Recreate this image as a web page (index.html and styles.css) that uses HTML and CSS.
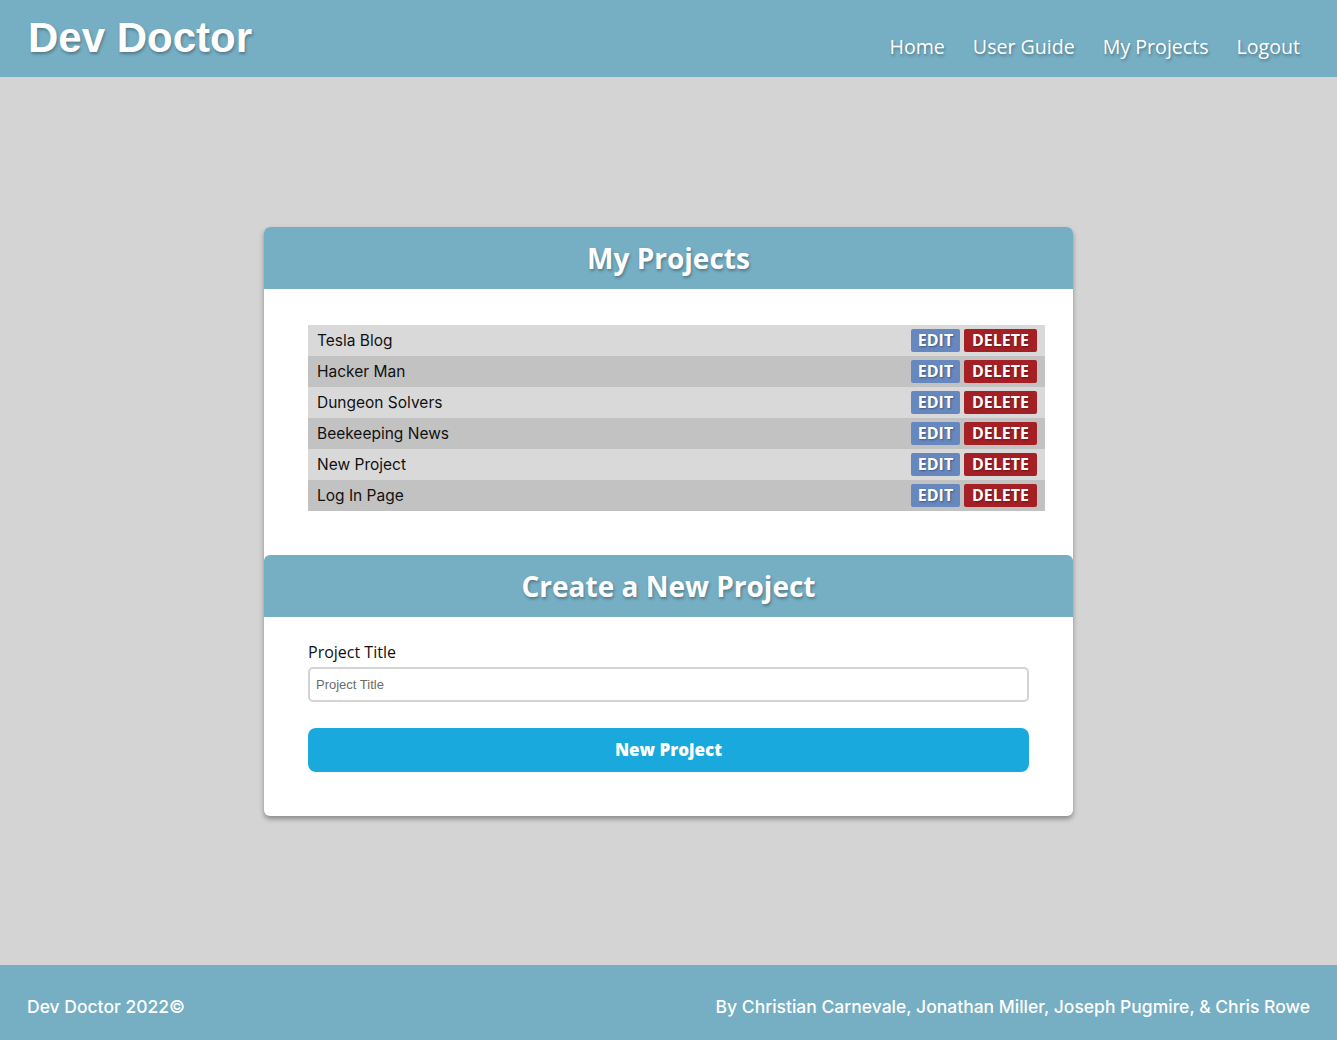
FILE: index.html
```html
<!DOCTYPE html>
<html>
<head>
<meta charset="utf-8">
<title>Dev Doctor</title>
<link rel="stylesheet" href="styles.css">
</head>
<body>
<header class="topbar">
  <h1 class="brand">Dev Doctor</h1>
  <nav class="nav">
    <a href="#">Home</a>
    <a href="#">User Guide</a>
    <a href="#">My Projects</a>
    <a href="#">Logout</a>
  </nav>
</header>
<main class="main">
  <section class="card">
    <h2 class="card-head">My Projects</h2>
    <div class="card-body list-body">
      <ul class="project-list">
        <li class="row"><span>Tesla Blog</span><span class="actions"><button class="btn-edit">EDIT</button><button class="btn-del">DELETE</button></span></li>
        <li class="row"><span>Hacker Man</span><span class="actions"><button class="btn-edit">EDIT</button><button class="btn-del">DELETE</button></span></li>
        <li class="row"><span>Dungeon Solvers</span><span class="actions"><button class="btn-edit">EDIT</button><button class="btn-del">DELETE</button></span></li>
        <li class="row"><span>Beekeeping News</span><span class="actions"><button class="btn-edit">EDIT</button><button class="btn-del">DELETE</button></span></li>
        <li class="row"><span>New Project</span><span class="actions"><button class="btn-edit">EDIT</button><button class="btn-del">DELETE</button></span></li>
        <li class="row"><span>Log In Page</span><span class="actions"><button class="btn-edit">EDIT</button><button class="btn-del">DELETE</button></span></li>
      </ul>
    </div>
    <h2 class="card-head">Create a New Project</h2>
    <form class="card-body form-body">
      <label class="label" for="title">Project Title</label>
      <input class="input" id="title" type="text" placeholder="Project Title">
      <button class="btn-new" type="button">New Project</button>
    </form>
  </section>
</main>
<footer class="footer">
  <span>Dev Doctor 2022©</span>
  <span>By Christian Carnevale, Jonathan Miller, Joseph Pugmire, &amp; Chris Rowe</span>
</footer>
</body>
</html>
```
FILE: styles.css
```css
* { box-sizing: border-box; }
html, body { margin: 0; padding: 0; height: 100%; }
body {
  background: #d4d4d4;
  font-family: "Open Sans", sans-serif;
  display: flex;
  flex-direction: column;
  min-height: 1040px;
}
.topbar {
  height: 77px;
  background: #76aec3;
  display: flex;
  justify-content: space-between;
  align-items: flex-start;
  padding: 0 37px 0 28px;
}
.brand {
  margin: 13px 0 0;
  font-family: "Liberation Sans", Arial, sans-serif;
  font-weight: bold;
  font-size: 42px;
  line-height: 50px;
  color: #fff;
  text-shadow: 1px 2px 3px rgba(0,0,0,0.3);
}
.nav {
  display: flex;
  gap: 28px;
  margin-top: 32px;
}
.nav a {
  color: #fff;
  text-decoration: none;
  font-size: 19.6px;
  line-height: 30px;
  text-shadow: 1px 2px 3px rgba(0,0,0,0.3);
}
.main {
  flex: 1;
  display: flex;
  justify-content: center;
  align-items: center;
}
.card {
  width: 809px;
  background: #fff;
  border-radius: 6px;
  box-shadow: 0 3px 5px rgba(0,0,0,0.35);
}
.card-head {
  margin: 0;
  height: 62px;
  background: #76aec3;
  border-radius: 6px 6px 0 0;
  color: #fff;
  text-align: center;
  font-size: 28px;
  font-weight: bold;
  line-height: 62px;
  text-shadow: 1px 2px 3px rgba(0,0,0,0.3);
}
.list-body {
  padding: 36px 28px 44px 44px;
}
.project-list {
  list-style: none;
  margin: 0;
  padding: 0;
}
.row {
  height: 31px;
  display: flex;
  align-items: center;
  justify-content: space-between;
  padding: 0 8px 0 9px;
  font-family: Inter, sans-serif;
  font-size: 15.5px;
  color: #111;
  background: #d9d9d9;
}
.row:nth-child(even) { background: #c2c2c2; }
.actions { display: flex; gap: 4px; }
.actions button {
  border: 0;
  height: 23px;
  border-radius: 2px;
  color: #fff;
  font-family: "Open Sans", sans-serif;
  font-weight: bold;
  font-size: 16px;
  line-height: 23px;
  padding: 0;
  text-shadow: 1px 1px 2px rgba(0,0,0,0.35);
}
.btn-edit { width: 49px; background: #6688bf; }
.btn-del { width: 73px; background: #a42025; }
.form-body {
  padding: 24px 44px 44px;
  display: flex;
  flex-direction: column;
}
.label {
  font-size: 16px;
  line-height: 22px;
  color: #111;
  margin-bottom: 4px;
}
.input {
  height: 35px;
  border: 2px solid #d3d3d3;
  border-radius: 5px;
  padding: 0 6px;
  font-family: "Liberation Sans", Arial, sans-serif;
  font-size: 13px;
  color: #333;
  margin-bottom: 26px;
}
.input::placeholder { color: #6b6b6b; }
.btn-new {
  height: 44px;
  border: 0;
  border-radius: 8px;
  background: #1aa9dd;
  color: #fff;
  font-family: "Open Sans", sans-serif;
  font-weight: 800;
  font-size: 17px;
}
.footer {
  height: 75px;
  background: #76aec3;
  color: #fff;
  display: flex;
  justify-content: space-between;
  align-items: center;
  padding: 8px 27px 0;
  font-family: Inter, sans-serif;
  font-weight: 500;
  font-size: 17.5px;
}
```
